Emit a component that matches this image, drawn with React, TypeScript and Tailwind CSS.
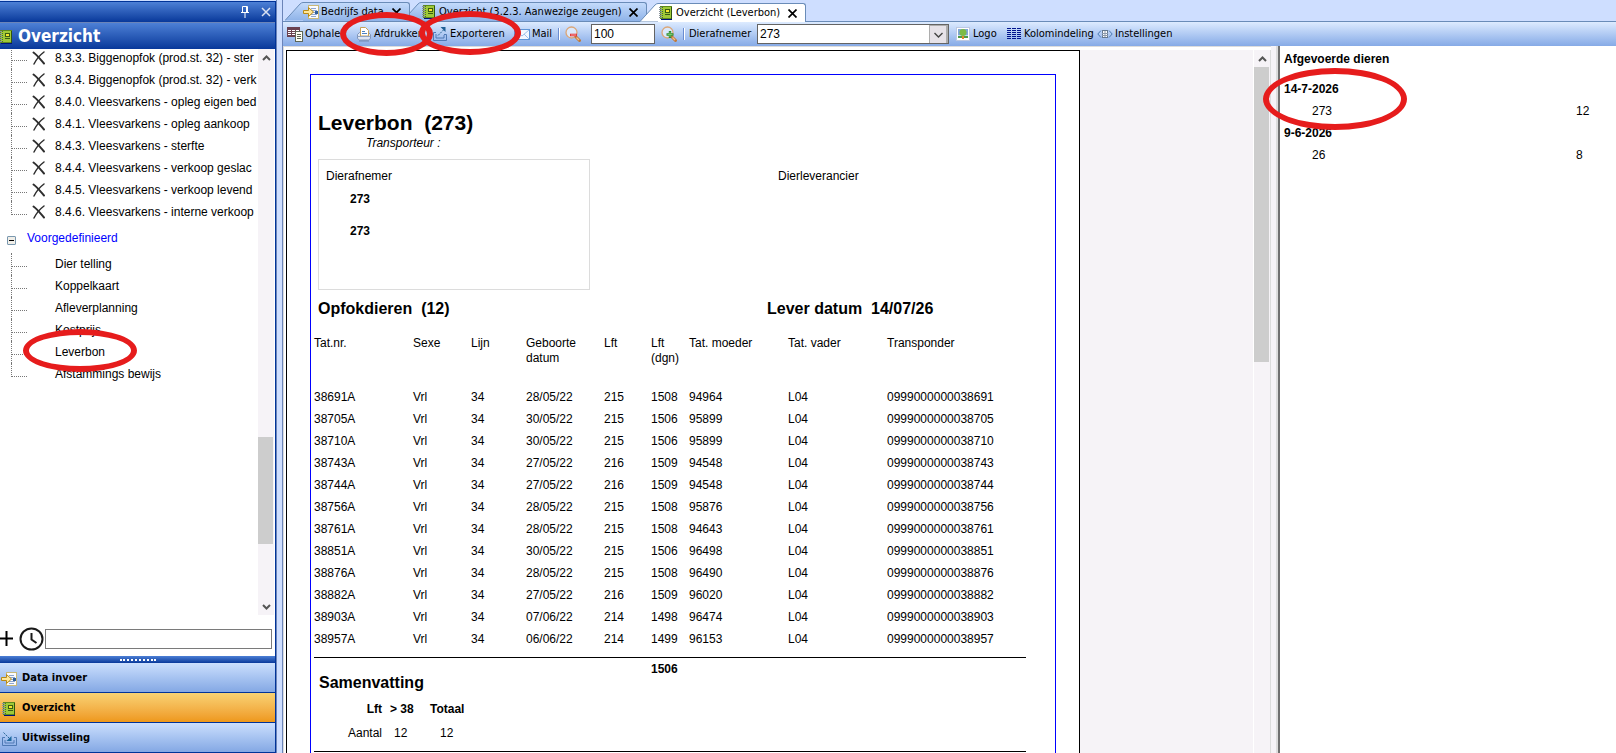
import React from 'react';

const TREE = [
  '8.3.3. Biggenopfok (prod.st. 32) - ster',
  '8.3.4. Biggenopfok (prod.st. 32) - verk',
  '8.4.0. Vleesvarkens - opleg eigen bed',
  '8.4.1. Vleesvarkens - opleg aankoop',
  '8.4.3. Vleesvarkens - sterfte',
  '8.4.4. Vleesvarkens - verkoop geslac',
  '8.4.5. Vleesvarkens - verkoop levend',
  '8.4.6. Vleesvarkens - interne verkoop',
];

const PREDEFINED = ['Dier telling', 'Koppelkaart', 'Afleverplanning', 'Kostprijs', 'Leverbon', 'Afstammings bewijs'];

const ROWS = [
  ['38691A', '28/05/22', '215', '1508', '94964', '0999000000038691'],
  ['38705A', '30/05/22', '215', '1506', '95899', '0999000000038705'],
  ['38710A', '30/05/22', '215', '1506', '95899', '0999000000038710'],
  ['38743A', '27/05/22', '216', '1509', '94548', '0999000000038743'],
  ['38744A', '27/05/22', '216', '1509', '94548', '0999000000038744'],
  ['38756A', '28/05/22', '215', '1508', '95876', '0999000000038756'],
  ['38761A', '28/05/22', '215', '1508', '94643', '0999000000038761'],
  ['38851A', '30/05/22', '215', '1506', '96498', '0999000000038851'],
  ['38876A', '28/05/22', '215', '1508', '96490', '0999000000038876'],
  ['38882A', '27/05/22', '216', '1509', '96020', '0999000000038882'],
  ['38903A', '07/06/22', '214', '1498', '96474', '0999000000038903'],
  ['38957A', '06/06/22', '214', '1499', '96153', '0999000000038957'],
];

function BookIcon() {
  return (
    <svg className="size-4 shrink-0" viewBox="0 0 16 16" shapeRendering="crispEdges">
      <rect x="2" y="1" width="12" height="13" fill="#5d8a1e" />
      <rect x="3" y="2" width="10" height="11" fill="#9fc938" />
      <rect x="3" y="14" width="11" height="1" fill="#00127a" />
      <rect x="13" y="2" width="1" height="12" fill="#2f5412" />
      <rect x="7" y="4" width="5" height="4" fill="#3b5c12" />
      <rect x="8" y="5" width="3" height="2" fill="#f7e62e" />
      <rect x="7" y="9" width="5" height="1" fill="#3b5c12" />
      {[2, 4, 6, 8, 10, 12].map((y) => (
        <g key={y}>
          <rect x="1" y={y} width="3" height="1" fill="#8a949c" />
          <rect x="4" y={y} width="1" height="1" fill="#4f7a1c" />
        </g>
      ))}
    </svg>
  );
}

function DataIcon() {
  return (
    <svg className="size-4 shrink-0" viewBox="0 0 16 16">
      <rect x="5.500" y="1.500" width="10" height="13" fill="#fbfbff" stroke="#c9b878" />
      <path d="M8 4.500h5M8 6.500h6M8 8.500h6M8 10.500h6M8 12.500h5" stroke="#8ea6cf" />
      <path d="M.5 6.500h5v-3l5 4.500-5 4.500v-3h-5z" fill="#ffe79a" stroke="#b88a16" />
      <rect x="12" y="7" width="3" height="3" fill="#2f5f9c" />
    </svg>
  );
}

function ExchangeIcon() {
  return (
    <svg className="size-4 shrink-0" viewBox="0 0 16 16" fill="none">
      <path d="M4 6.500H1.500v8h14v-8H13M4 9v3h9V9" stroke="#4e79b5" />
      <path d="M2.500 1.500l7 7" stroke="#2a6798" strokeDasharray="2 1" />
      <path d="M10.500 5v5h-5z" fill="#1f6aa0" />
    </svg>
  );
}

function TableIcon() {
  return (
    <svg className="size-4 shrink-0" viewBox="0 0 16 16" shapeRendering="crispEdges">
      <rect x="0" y="1" width="13" height="10" fill="#6b4250" />
      {[4, 6, 8].map((y) => (
        <g key={y} fill="#fff">
          <rect x="1" y={y} width="3" height="1" />
          <rect x="5" y={y} width="3" height="1" />
          <rect x="9" y={y} width="3" height="1" />
        </g>
      ))}
      <rect x="8.500" y="5.500" width="7" height="10" fill="#fffff2" stroke="#5d6655" />
      <path d="M10 8.500h4M10 10.500h4M10 12.500h4" stroke="#5d6655" />
    </svg>
  );
}

function PrintIcon() {
  return (
    <svg className="size-4 shrink-0" viewBox="0 0 16 16">
      <path d="M1.500 8.500l2-2h9l2 2v4l-2 1.500h-9l-2-1.500z" fill="#dfe6f3" stroke="#7f94b8" />
      <path d="M4.500 10V1.500h5l3 3V10z" fill="#fff" stroke="#c6a25a" />
      <path d="M6 5.500h3M6 7.500h5" stroke="#4c82c4" />
      <path d="M1.500 10.500h13" stroke="#8da2c5" />
      <path d="M3 15h10" stroke="#728bb5" />
    </svg>
  );
}

function ExportIcon() {
  return (
    <svg className="size-4 shrink-0" viewBox="0 0 16 16" fill="none">
      <path d="M4 6.500H1.500v8h13v-6H12M4 8v4h8V9" stroke="#4e79b5" />
      <path d="M6 9.500l6-6" stroke="#2a6798" strokeDasharray="2 1" />
      <path d="M8.500 1H13.500v5z" fill="#1f5f95" />
    </svg>
  );
}

function MailIcon() {
  return (
    <svg className="size-4 shrink-0" viewBox="0 0 16 16">
      <rect x=".5" y="3.500" width="15" height="10" fill="#f4f9ff" stroke="#5d94d6" />
      <path d="M1 4l7 6 7-6M1 13l5-5M15 13l-5-5" fill="none" stroke="#9ec0ea" />
    </svg>
  );
}

function ZoomIcon({ plus = false }: { plus?: boolean }) {
  return (
    <svg className="size-4 shrink-0" viewBox="0 0 16 16">
      <circle cx="6.500" cy="6.500" r="5.500" fill="#dbe8fb" stroke="#dba677" strokeWidth="1.300" />
      <path d="M11 11l3.500 3.500" stroke="#c07a3c" strokeWidth="3" strokeLinecap="round" />
      <path d="M11.500 11.500l2.500 2.500" stroke="#f2c08c" strokeWidth="1.200" />
      {plus ? (
        <path d="M9 5v7M5.500 8.500h7" stroke="#2f8a2f" strokeWidth="2.400" />
      ) : (
        <path d="M5 9h7" stroke="#e23a3a" strokeWidth="2.600" />
      )}
      {plus && <path d="M9 6v5M6.500 8.500h5" stroke="#86d476" strokeWidth=".8" />}
      {!plus && <path d="M6 9h5" stroke="#ffb0b0" strokeWidth=".8" />}
    </svg>
  );
}

function LogoIcon() {
  return (
    <svg className="size-4 shrink-0" viewBox="0 0 16 16">
      <rect x="1.500" y="1.500" width="13" height="13" fill="#fff" stroke="#bcc8e2" />
      <rect x="3" y="3" width="10" height="8" fill="#7fa5d8" />
      <rect x="3" y="9" width="10" height="1" fill="#c6dcf5" />
      <rect x="3" y="10" width="10" height="2" fill="#4f9a45" />
      <circle cx="8" cy="6.500" r="3.500" fill="#7cbb45" />
      <path d="M8 10v3" stroke="#e0862d" strokeWidth="2" />
    </svg>
  );
}

function ColumnsIcon() {
  return (
    <svg className="size-4 shrink-0" viewBox="0 0 16 16" shapeRendering="crispEdges">
      {[2, 4, 6, 8, 10, 12].map((y) => (
        <path key={y} d={`M1 ${y + 0.5}h4M6 ${y + 0.5}h4M11 ${y + 0.5}h4`} stroke="#00138c" />
      ))}
    </svg>
  );
}

function SettingsIcon() {
  return (
    <svg className="size-4 shrink-0" viewBox="0 0 16 16" fill="none">
      <path d="M4 4.500L.8 8 4 11.500M12 4.500l3.200 3.500L12 11.500" stroke="#4a7ab0" />
      <rect x="5.500" y="4.500" width="5" height="7" fill="#fff" stroke="#64788e" />
      <path d="M8 5v6M5 7.500h6M5 9.500h6" stroke="#8b99ab" />
    </svg>
  );
}

function DeleteIcon() {
  return (
    <svg className="size-4 shrink-0" viewBox="0 0 16 16" fill="none" stroke="#2e2e2e" strokeLinecap="round">
      <path d="M2.500 2.500C6 5 10 10 13 13.500" strokeWidth="2" />
      <path d="M13 2C9 5 5 10 3 14" strokeWidth="1.500" />
    </svg>
  );
}

function Arrow({ down = false }: { down?: boolean }) {
  return (
    <svg className="mx-auto h-[17px] w-[15px] shrink-0" viewBox="0 0 15 17" fill="none" stroke="#555" strokeWidth="2">
      <path d={down ? 'M4 7l3.500 3.500L11 7' : 'M4 11l3.500-3.500L11 11'} />
    </svg>
  );
}

function Ring({ className }: { className: string }) {
  return (
    <span
      aria-hidden="true"
      className={`pointer-events-none absolute z-20 rounded-[50%] border-6 border-[#e61c1c] ${className}`}
    />
  );
}

function Tab({ icon, label, active = false, className }: { icon: React.ReactNode; label: string; active?: boolean; className: string }) {
  return (
    <div className={`flex h-[19px] ${className}`}>
      <svg className="h-[19px] w-[18px] shrink-0" viewBox="0 0 18 19">
        <defs>
          <linearGradient id="tabfill" x1="0" y1="0" x2="0" y2="1">
            <stop offset="0" stopColor="#c3dafb" />
            <stop offset="1" stopColor="#8fb3e8" />
          </linearGradient>
        </defs>
        <path d="M0 18.500L15 2Q16.500 .5 18 .5V18.500z" fill={active ? '#fff' : 'url(#tabfill)'} />
        <path d="M0 18.500L15 2Q16.500 .5 18 .5" fill="none" stroke="#6a8cb8" />
      </svg>
      <div
        className={`flex flex-1 items-center rounded-tr-[3px] border-t border-r border-[#6a8cb8] pr-2 ${
          active ? 'bg-white' : 'bg-linear-to-b from-[#c3dafb] to-[#8fb3e8]'
        }`}
      >
        <button className="flex flex-1 items-center gap-[2px] whitespace-nowrap">
          {icon}
          {label}
        </button>
        <button aria-label={`${label} sluiten`}>
          <svg className="size-[9px]" viewBox="0 0 9 9" stroke="#000" strokeWidth="1.700">
            <path d="M.5 .5l8 8M8.500 .5l-8 8" />
          </svg>
        </button>
      </div>
    </div>
  );
}

function ToolButton({ icon, label, className, children }: { icon: React.ReactNode; label: string; className: string; children?: React.ReactNode }) {
  return (
    <button className={`relative flex h-6 shrink-0 items-center gap-[2px] whitespace-nowrap ${className}`}>
      {icon}
      {label}
      {children}
    </button>
  );
}

function Separator() {
  return <span className="h-3 w-[2px] shrink-0 border-r border-l border-l-[#6a8cd0] border-r-white" />;
}

function Sidebar() {
  return (
    <aside className="flex w-[277px] shrink-0 flex-col border-r border-[#6b84b8] pt-px">
      <div className="flex h-[21px] items-center justify-end gap-3 border-t border-r border-[#003399] bg-linear-to-b from-[#4d80d6] to-[#08389a] pr-1">
        <button aria-label="Vastzetten">
          <svg className="h-3 w-2" viewBox="0 0 8 12" fill="none" stroke="#fff">
            <path d="M1.500 .5h5v6h-5zM0 6.500h8M4 7v5M5.500 1v6" />
          </svg>
        </button>
        <button aria-label="Sluiten">
          <svg className="size-[10px]" viewBox="0 0 10 10" stroke="#dbe2f2" strokeWidth="1.500">
            <path d="M1 1l8 8M9 1L1 9" />
          </svg>
        </button>
      </div>
      <div className="flex min-h-0 flex-1 flex-col border-r border-[#003399] bg-white">
        <div className="flex h-[27px] shrink-0 items-center gap-1 overflow-hidden border-t border-[#6b84b8] bg-linear-to-b from-[#4d80d6] to-[#08389a] pt-px text-[17px] font-bold text-white">
          <span className="-ml-[2px] flex">
            <BookIcon />
          </span>
          <h2>Overzicht</h2>
        </div>

        <div className="flex min-h-0 flex-1 font-['Liberation_Sans',sans-serif] text-xs [font-stretch:normal]">
          <div className="min-w-0 flex-1 overflow-hidden">
            <ul className="-mt-[2px]">
              {TREE.map((t, i) => (
                <li key={t} className="flex h-[22px] items-center pl-[11px]">
                  <span className={`flex w-5 shrink-0 items-end border-l border-dotted border-[#777] ${i === TREE.length - 1 ? 'h-[14px] self-start' : 'h-full pb-2'}`}>
                    <span className="w-[15px] border-b border-dotted border-[#777]" />
                  </span>
                  <DeleteIcon />
                  <span className="pl-2 whitespace-nowrap">{t}</span>
                </li>
              ))}
            </ul>
            <div className="flex h-[30px] items-center gap-[11px] pl-[7px]">
              <button aria-label="Inklappen" className="mt-1 flex size-[9px] items-center rounded-[1px] border border-[#7a98af] bg-[#f0eee8] px-px">
                <span className="h-px w-full bg-black" />
              </button>
              <span className="text-[#0000ff]">Voorgedefinieerd</span>
            </div>
            <ul>
              {PREDEFINED.map((t, i) => (
                <li key={t} className="relative flex h-[22px] items-center pl-[11px]">
                  <span className={`flex w-11 shrink-0 items-end border-l border-dotted border-[#777] ${i === PREDEFINED.length - 1 ? 'h-[14px] self-start' : 'h-full pb-2'}`}>
                    <span className="w-[15px] border-b border-dotted border-[#777]" />
                  </span>
                  <a href="#" className="whitespace-nowrap">{t}</a>
                  {t === 'Leverbon' && <Ring className="-top-3 left-[23px] h-[43px] w-[114px]" />}
                </li>
              ))}
            </ul>
          </div>
          <div className="mr-px flex w-4 shrink-0 flex-col bg-[#f6f3f7]">
            <Arrow />
            <div className="flex-69" />
            <div className="mr-px flex-20 bg-[#cdcdcd]" />
            <div className="flex-10" />
            <Arrow down />
          </div>
        </div>

        <div className="flex h-[41px] shrink-0 items-center gap-px pt-[6px] pr-[3px]">
          <button aria-label="Toevoegen">
            <svg className="h-[15px] w-[18px]" viewBox="0 0 18 15" stroke="#000" strokeWidth="2">
              <path d="M0 7.500h13M6.500 0v15" />
            </svg>
          </button>
          <button aria-label="Recent">
            <svg className="h-6 w-[25px]" viewBox="0 0 25 24" fill="none" stroke="#1a1a1a" strokeWidth="2">
              <ellipse cx="12.500" cy="12" rx="11" ry="10.500" />
              <path d="M12.500 6v6.500l5 3.500" />
            </svg>
          </button>
          <input aria-label="Zoeken" className="h-5 min-w-0 flex-1 border border-[#7a7a7a] bg-white px-1 text-xs outline-none" />
        </div>

        <div className="flex h-[7px] shrink-0 items-center justify-center bg-linear-to-b from-[#4d80d6] to-[#08389a]">
          <span className="w-9 border-t-2 border-dotted border-white" />
        </div>
        <nav className="shrink-0 font-bold">
          <button className="flex h-[30px] w-full items-center gap-[5px] border-b border-[#003399] bg-linear-to-b from-[#cbdffd] to-[#84a8e4] pt-[2px] pl-px">
            <DataIcon />
            Data invoer
          </button>
          <button className="flex h-[30px] w-full items-center gap-[5px] border-b border-[#003399] bg-linear-to-b from-[#f8d272] to-[#ee9818] pt-[2px] pl-px">
            <BookIcon />
            Overzicht
          </button>
          <button className="flex h-[30px] w-full items-center gap-[5px] border-b border-[#003399] bg-linear-to-b from-[#cbdffd] to-[#84a8e4] pt-[2px] pl-px">
            <ExchangeIcon />
            Uitwisseling
          </button>
        </nav>
      </div>
    </aside>
  );
}

function Toolbar() {
  return (
    <div className="flex h-6 shrink-0 items-center bg-linear-to-b from-[#ddebff] to-[#86aae6] pl-1">
      <ToolButton className="w-[69px]" icon={<TableIcon />} label="Ophalen" />
      <ToolButton className="w-[76px]" icon={<PrintIcon />} label="Afdrukken">
        <Ring className="-top-[10px] -left-4 h-11 w-[93px]" />
      </ToolButton>
      <ToolButton className="w-[82px]" icon={<ExportIcon />} label="Exporteren">
        <Ring className="-top-[11px] -left-[13px] h-11 w-[102px]" />
      </ToolButton>
      <ToolButton className="w-11" icon={<MailIcon />} label="Mail" />
      <Separator />
      <button aria-label="Uitzoomen" className="ml-[5px]">
        <ZoomIcon />
      </button>
      <input
        aria-label="Zoom"
        defaultValue="100"
        className="ml-[10px] h-5 w-16 border border-[#646464] bg-white px-[2px] font-['Liberation_Sans',sans-serif] text-xs outline-none"
      />
      <button aria-label="Inzoomen" className="ml-[6px]">
        <ZoomIcon plus />
      </button>
      <span className="ml-[6px] flex">
        <Separator />
      </span>
      <label htmlFor="afnemer" className="ml-1 w-[68px]">Dierafnemer</label>
      <div className="relative">
        <select
          id="afnemer"
          className="block h-5 w-48 appearance-none border border-[#646464] bg-white px-[2px] font-['Liberation_Sans',sans-serif] text-xs outline-none"
        >
          <option>273</option>
        </select>
        <span className="pointer-events-none absolute top-px right-px flex h-[18px] w-[19px] items-center justify-center border-t border-r-2 border-l border-[#adadad] bg-[#e6e2e8]">
          <svg className="h-2 w-[9px]" viewBox="0 0 9 8" fill="none" stroke="#444" strokeWidth="1.400">
            <path d="M.5 2l4 4 4-4" />
          </svg>
        </span>
      </div>
      <ToolButton className="ml-[6px] w-[51px]" icon={<LogoIcon />} label="Logo" />
      <ToolButton className="w-[91px]" icon={<ColumnsIcon />} label="Kolomindeling" />
      <ToolButton className="w-20" icon={<SettingsIcon />} label="Instellingen" />
    </div>
  );
}

function Report() {
  return (
    <div className="w-[794px] shrink-0 overflow-hidden border border-b-0 border-black bg-white px-[23px] pt-[23px]">
      <div className="h-[1000px] border border-[#0000ff] px-[3px] pt-[35px]">
        <h1 className="pl-1 text-[21px] leading-[25px] font-bold whitespace-pre">Leverbon  (273)</h1>
        <p className="pl-[52px] leading-4 italic">Transporteur :</p>
        <div className="mt-2 ml-1 flex">
          <div className="h-[131px] w-[272px] border border-[#dcdcdc] pt-2 pl-[7px]">
            <p className="leading-4">Dierafnemer</p>
            <p className="mt-[7px] pl-6 leading-4 font-bold">273</p>
            <p className="mt-4 pl-6 leading-4 font-bold">273</p>
          </div>
          <p className="mt-[9px] ml-[188px] leading-4">Dierleverancier</p>
        </div>
        <div className="mt-[9px] flex pl-1 text-base leading-5 font-bold whitespace-pre">
          <h2 className="w-[449px]">Opfokdieren  (12)</h2>
          <p>Lever datum  14/07/26</p>
        </div>
        <table className="mt-[17px] w-[712px] table-fixed text-left">
          <colgroup>
            <col className="w-[99px]" />
            <col className="w-[58px]" />
            <col className="w-[55px]" />
            <col className="w-[78px]" />
            <col className="w-[47px]" />
            <col className="w-[38px]" />
            <col className="w-[99px]" />
            <col className="w-[99px]" />
            <col />
          </colgroup>
          <thead className="align-top leading-[15px]">
            <tr className="h-[50px]">
              <th className="font-normal">Tat.nr.</th>
              <th className="font-normal">Sexe</th>
              <th className="font-normal">Lijn</th>
              <th className="font-normal">Geboorte<br />datum</th>
              <th className="font-normal">Lft</th>
              <th className="font-normal">Lft<br />(dgn)</th>
              <th className="font-normal">Tat. moeder</th>
              <th className="font-normal">Tat. vader</th>
              <th className="font-normal">Transponder</th>
            </tr>
          </thead>
          <tbody>
            {ROWS.map(([tat, born, lft, days, mother, transponder]) => (
              <tr key={tat} className="h-[22px]">
                <td>{tat}</td>
                <td>Vrl</td>
                <td>34</td>
                <td>{born}</td>
                <td>{lft}</td>
                <td>{days}</td>
                <td>{mother}</td>
                <td>L04</td>
                <td>{transponder}</td>
              </tr>
            ))}
          </tbody>
        </table>
        <div className="mt-[7px] w-[712px] border-t border-black pt-[3px]">
          <p className="pl-[337px] leading-4 font-bold">1506</p>
        </div>
        <h2 className="-mt-1 pl-[5px] text-base leading-5 font-bold">Samenvatting</h2>
        <table className="mt-1">
          <thead>
            <tr className="h-6">
              <th className="w-[68px] text-right">Lft</th>
              <th className="w-12 pl-2 text-left">&gt; 38</th>
              <th className="w-10 text-left">Totaal</th>
            </tr>
          </thead>
          <tbody>
            <tr className="h-6">
              <td className="text-right">Aantal</td>
              <td className="pl-3">12</td>
              <td className="pl-[10px]">12</td>
            </tr>
          </tbody>
        </table>
        <div className="mt-[6px] w-[712px] border-t border-black" />
      </div>
    </div>
  );
}

function Removed() {
  return (
    <aside className="w-[338px] shrink-0 border-l-2 border-[#707070] bg-white pt-[2px]">
      <h2 className="pl-1 leading-[22px] font-bold">Afgevoerde dieren</h2>
      <table className="mt-2 w-full">
        <tbody>
          <tr className="h-[22px]">
            <th colSpan={2} className="relative pl-1 text-left">
              14-7-2026
              <Ring className="-top-[10px] -left-[17px] h-[62px] w-[144px]" />
            </th>
          </tr>
          <tr className="h-[22px]">
            <td className="pl-8">273</td>
            <td className="w-10">12</td>
          </tr>
          <tr className="h-[22px]">
            <th colSpan={2} className="pl-1 text-left">9-6-2026</th>
          </tr>
          <tr className="h-[22px]">
            <td className="pl-8">26</td>
            <td>8</td>
          </tr>
        </tbody>
      </table>
    </aside>
  );
}

export default function App() {
  return (
    <div className="flex h-screen overflow-hidden bg-[#cedeff] font-['DejaVu_Sans_Condensed','DejaVu_Sans',sans-serif] text-[11px] [font-stretch:condensed] text-black">
      <Sidebar />
      <main className="ml-[5px] flex min-w-0 flex-1 flex-col border-l border-[#6b84b8]">
        <div className="flex h-[22px] shrink-0 items-end border-b border-[#6a8cb8]">
          <Tab className="relative z-2 ml-[2px] w-[125px]" icon={<DataIcon />} label="Bedrijfs data" />
          <Tab className="-ml-[7px] w-[244px]" icon={<BookIcon />} label="Overzicht (3.2.3. Aanwezige zeugen)" />
          <Tab active className="relative z-3 -mb-px -ml-[7px] w-[166px]" icon={<BookIcon />} label="Overzicht (Leverbon)" />
        </div>
        <Toolbar />
        <div className="flex min-h-0 flex-1 font-['Liberation_Sans',sans-serif] text-xs [font-stretch:normal]">
          <div className="flex min-w-0 flex-1 border-t border-l border-[#dcdcdc] bg-white pt-[3px] pl-[2px]">
            <Report />
            <div className="flex-1 bg-[#f6f3f7]" />
            <div className="flex w-[18px] shrink-0 flex-col border-r border-l border-l-white border-r-[#dcdcdc] bg-[#f6f3f7]">
              <Arrow />
              <div className="mr-px w-[15px] flex-43 bg-[#cdcdcd]" />
              <div className="flex-57" />
            </div>
          </div>
          <div className="w-[7px] shrink-0 border-r-2 border-[#dcdcdc] bg-[#f6f3f7]" />
          <Removed />
        </div>
      </main>
    </div>
  );
}
